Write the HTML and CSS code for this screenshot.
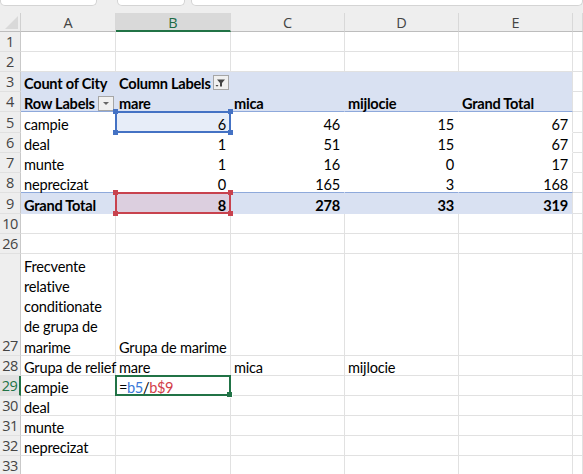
FILE: index.html
```html
<!DOCTYPE html>
<html lang="en">
<head>
    <meta charset="UTF-8">
    <title>Pivot - Frecvente</title>
    <link rel="stylesheet" href="styles.css">
</head>
<body>
    <div class="ribbon">
        <div class="box box-name"></div>
        <div class="box box-mid"></div>
        <div class="box box-formula"></div>
    </div>

    <div class="sheet">
        <!-- column headers -->
        <div class="corner"><span class="tri"></span></div>
        <div class="ch">A</div>
        <div class="ch ch-sel">B</div>
        <div class="ch">C</div>
        <div class="ch">D</div>
        <div class="ch">E</div>
        <div class="ch"></div>

        <div class="rh">1</div>
        <div class="c"></div><div class="c"></div><div class="c"></div><div class="c"></div><div class="c"></div><div class="c"></div>

        <div class="rh">2</div>
        <div class="c"></div><div class="c"></div><div class="c"></div><div class="c"></div><div class="c"></div><div class="c"></div>

        <!-- pivot table -->
        <div class="rh">3</div>
        <div class="c pv b">Count of City</div>
        <div class="c pv b">Column Labels
            <span class="pbtn pbtn-filter">
                <svg width="12" height="10" viewBox="0 0 12 10"><path d="M2 1.5h8L7 5v3.5H5V5z" fill="#444"/><path d="M0.5 7h3L2 8.8z" fill="#444"/></svg>
            </span>
        </div>
        <div class="c pv"></div><div class="c pv"></div><div class="c pv pv-end"></div><div class="c"></div>

        <div class="rh">4</div>
        <div class="c pv sep b">Row Labels
            <span class="pbtn pbtn-drop">
                <svg width="8" height="5" viewBox="0 0 8 5"><path d="M1 1h6L4 4z" fill="#666"/></svg>
            </span>
        </div>
        <div class="c pv sep b">mare</div>
        <div class="c pv sep b">mica</div>
        <div class="c pv sep b">mijlocie</div>
        <div class="c pv sep pv-end b">Grand Total</div>
        <div class="c"></div>

        <div class="rh">5</div>
        <div class="c pw">campie</div>
        <div class="c pw num ref ref-blue">6<i class="h tl"></i><i class="h tr"></i><i class="h bl"></i><i class="h br"></i></div>
        <div class="c pw num">46</div>
        <div class="c pw num">15</div>
        <div class="c pw num pv-end">67</div>
        <div class="c"></div>

        <div class="rh">6</div>
        <div class="c pw">deal</div>
        <div class="c pw num">1</div>
        <div class="c pw num">51</div>
        <div class="c pw num">15</div>
        <div class="c pw num pv-end">67</div>
        <div class="c"></div>

        <div class="rh">7</div>
        <div class="c pw">munte</div>
        <div class="c pw num">1</div>
        <div class="c pw num">16</div>
        <div class="c pw num">0</div>
        <div class="c pw num pv-end">17</div>
        <div class="c"></div>

        <div class="rh">8</div>
        <div class="c pw sep">neprecizat</div>
        <div class="c pw sep num">0</div>
        <div class="c pw sep num">165</div>
        <div class="c pw sep num">3</div>
        <div class="c pw sep num pv-end">168</div>
        <div class="c"></div>

        <div class="rh">9</div>
        <div class="c pv b">Grand Total</div>
        <div class="c pv num b ref ref-red">8<i class="h tl"></i><i class="h tr"></i><i class="h bl"></i><i class="h br"></i></div>
        <div class="c pv num b">278</div>
        <div class="c pv num b">33</div>
        <div class="c pv num b pv-end">319</div>
        <div class="c"></div>

        <div class="rh">10</div>
        <div class="c"></div><div class="c"></div><div class="c"></div><div class="c"></div><div class="c"></div><div class="c"></div>

        <div class="rh">26</div>
        <div class="c"></div><div class="c"></div><div class="c"></div><div class="c"></div><div class="c"></div><div class="c"></div>

        <!-- frecvente relative -->
        <div class="rh">27</div>
        <div class="c wrap"><span>Frecvente relative conditionate de grupa de marime</span></div>
        <div class="c">Grupa de marime</div>
        <div class="c"></div><div class="c"></div><div class="c"></div><div class="c"></div>

        <div class="rh">28</div>
        <div class="c">Grupa de relief</div>
        <div class="c">mare</div>
        <div class="c">mica</div>
        <div class="c">mijlocie</div>
        <div class="c"></div><div class="c"></div>

        <div class="rh rh-sel">29</div>
        <div class="c">campie</div>
        <div class="c active formula"><span>=</span><span class="f-blue">b5</span><span>/</span><span class="f-red">b$9</span><i class="fill-handle"></i></div>
        <div class="c"></div><div class="c"></div><div class="c"></div><div class="c"></div>

        <div class="rh">30</div>
        <div class="c">deal</div>
        <div class="c"></div><div class="c"></div><div class="c"></div><div class="c"></div><div class="c"></div>

        <div class="rh">31</div>
        <div class="c">munte</div>
        <div class="c"></div><div class="c"></div><div class="c"></div><div class="c"></div><div class="c"></div>

        <div class="rh">32</div>
        <div class="c">neprecizat</div>
        <div class="c"></div><div class="c"></div><div class="c"></div><div class="c"></div><div class="c"></div>

        <div class="rh">33</div>
        <div class="c"></div><div class="c"></div><div class="c"></div><div class="c"></div><div class="c"></div><div class="c"></div>
    </div>
</body>
</html>
```

FILE: styles.css
```css
body {
    margin: 0;
    padding: 0;
    background-color: #ffffff;
    font-family: Lato, "Open Sans", sans-serif;
    font-size: 14.6px;
    color: #000;
    overflow: hidden;
}

/* bottom edge of the toolbar above the grid */
.ribbon {
    height: 13px;
    background-color: #eeeeee;
    display: flex;
    align-items: flex-start;
}

.box {
    height: 5px;
    background-color: #fff;
    border: 1px solid #d4d4d4;
    border-top: none;
    border-radius: 0 0 5px 5px;
}

.box-name {
    width: 95px;
}

.box-mid {
    width: 66px;
    margin-left: 20px;
}

.box-formula {
    flex: 1;
    margin-left: 6px;
}

.sheet {
    display: grid;
    grid-template-columns: 21px 95px 115px 114px 114px 114px 1fr;
    grid-template-rows: 19px 20px 20px 20px 20px 21px 20px 20px 20px 21px 20px 20px 102px 20px 20px 20px 20px 20px 20px;
}

.corner {
    background-color: #eeeeee;
    border-right: 1px solid #d0d0d0;
    border-bottom: 1px solid #bdbdbd;
    position: relative;
}

.tri {
    position: absolute;
    right: 2px;
    bottom: 2px;
    width: 0;
    height: 0;
    border-left: 13px solid transparent;
    border-bottom: 13px solid #d9d9d9;
}

.ch {
    box-sizing: border-box;
    background-color: #eeeeee;
    border-right: 1px solid #d8d8d8;
    border-bottom: 1px solid #bdbdbd;
    color: #444;
    font-family: "Open Sans", sans-serif;
    font-size: 14.5px;
    text-align: center;
    line-height: 19px;
}

.ch-sel {
    background-color: #d9d9d9;
    border-bottom: 2px solid #217346;
    color: #1d6b45;
}

.rh {
    box-sizing: border-box;
    background-color: #eeeeee;
    border-right: 1px solid #c9c9c9;
    border-bottom: 1px solid #e0e0e0;
    color: #444;
    font-family: "Open Sans", sans-serif;
    font-size: 14.5px;
    display: flex;
    align-items: flex-end;
    justify-content: center;
    line-height: 18px;
    letter-spacing: -0.5px;
    white-space: nowrap;
}

.rh-sel {
    background-color: #e1e1e1;
    border-right: 2px solid #217346;
    color: #217346;
}

.c {
    box-sizing: border-box;
    border-right: 1px solid #e1e1e1;
    border-bottom: 1px solid #e1e1e1;
    padding: 0 4px 0 3px;
    display: flex;
    align-items: flex-end;
    line-height: 15px;
    letter-spacing: -0.2px;
    white-space: nowrap;
    position: relative;
}

.wrap {
    white-space: normal;
    line-height: 20.3px;
}

.wrap span {
    margin-bottom: -3px;
}

.b {
    font-weight: bold;
    letter-spacing: -0.25px;
}

.num {
    justify-content: flex-end;
}

.formula {
    letter-spacing: -0.4px;
}

/* pivot table */
.pv {
    background-color: #d9e1f2;
    border-color: #d9e1f2;
}

.pw {
    background-color: #ffffff;
    border-color: #ffffff;
}

.pv-end {
    border-right-color: #e1e1e1;
}

.sep {
    border-bottom-color: #8ea9db;
}

.pbtn {
    position: absolute;
    right: 1px;
    bottom: 0;
    width: 16px;
    height: 15px;
    box-sizing: border-box;
    background-color: #f0f0f0;
    border: 1px solid #a6a6a6;
    display: flex;
    align-items: center;
    justify-content: center;
}

.pbtn-filter {
    bottom: 1px;
}

/* range references of the formula being typed */
.ref::after {
    content: "";
    position: absolute;
    left: -1px;
    top: -1px;
    right: -1px;
    bottom: -1px;
    border: 2px solid;
}

.ref-blue {
    background-color: #e7edf8;
}

.ref-blue::after {
    border-color: #4472c4;
}

.ref-red {
    background-color: #dccfdf;
}

.ref-red::after {
    border-color: #c8424e;
}

.h {
    position: absolute;
    width: 5px;
    height: 5px;
    z-index: 2;
}

.ref-blue .h {
    background-color: #4472c4;
}

.ref-red .h {
    background-color: #c8424e;
}

.tl { left: -3px; top: -3px; }
.tr { right: -3px; top: -3px; }
.bl { left: -3px; bottom: -3px; }
.br { right: -3px; bottom: -3px; }

.active::after {
    content: "";
    position: absolute;
    left: -1px;
    top: -1px;
    right: -1px;
    bottom: -1px;
    border: 2px solid #217346;
}

.fill-handle {
    position: absolute;
    right: -3px;
    bottom: -3px;
    width: 5px;
    height: 5px;
    background-color: #217346;
    border: 1px solid #fff;
    border-top: none;
    border-left: none;
    z-index: 2;
}

.f-blue {
    color: #3a78d8;
}

.f-red {
    color: #d2404a;
}
```
